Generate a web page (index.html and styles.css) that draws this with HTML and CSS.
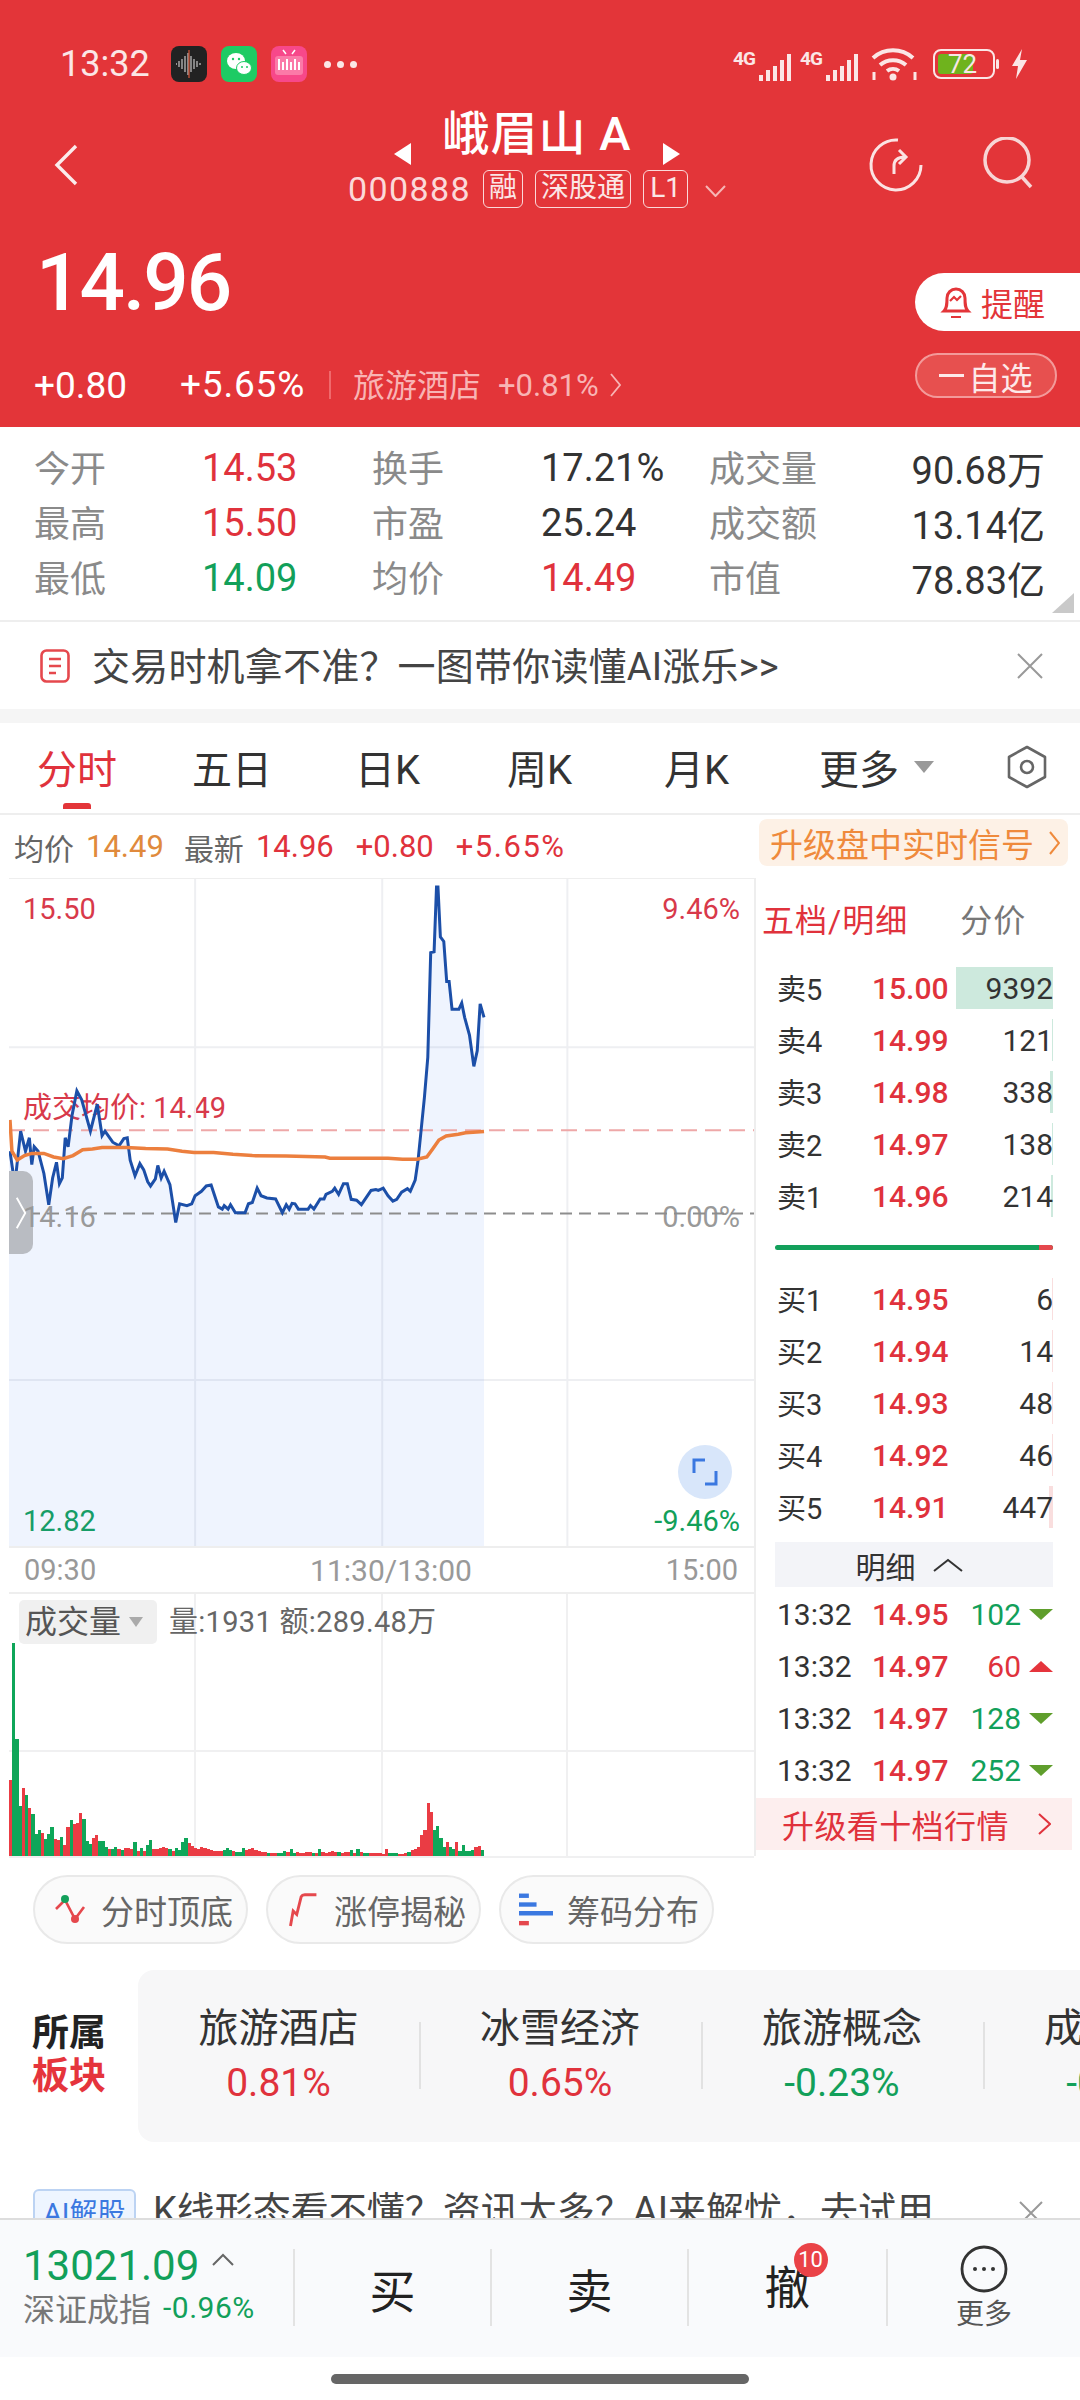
FILE: index.html
```html
<!DOCTYPE html>
<html lang="zh-CN">
<head>
<meta charset="utf-8">
<title>峨眉山A</title>
<link rel="stylesheet" href="styles.css">
</head>
<body>
<div class="page">
<header class="header">
  <div class="status">
    <span class="clock">13:32</span>
    <svg class="app app-rec" viewBox="0 0 36 36"><rect width="36" height="36" rx="8" fill="#222"/><path d="M5 18h1M8 15v6M11 13v10M14 10v16M17 7v22M20 10v16M23 13v10M26 15v6M29 17v2" stroke="#bbb" stroke-width="1.3"/><path d="M18 4v28" stroke="#d9583a" stroke-width="1.2"/></svg>
    <svg class="app" viewBox="0 0 36 36"><rect width="36" height="36" rx="8" fill="#1ecb64"/><ellipse cx="15" cy="15" rx="9" ry="8" fill="#fff"/><ellipse cx="23" cy="22" rx="7.5" ry="6.5" fill="#fff" stroke="#1ecb64"/><circle cx="12" cy="13" r="1.2" fill="#1ecb64"/><circle cx="18" cy="13" r="1.2" fill="#1ecb64"/><circle cx="21" cy="21" r="1" fill="#1ecb64"/><circle cx="26" cy="21" r="1" fill="#1ecb64"/></svg>
    <svg class="app" viewBox="0 0 36 36"><rect width="36" height="36" rx="8" fill="#f7488a"/><path d="M12 4l3 4M24 4l-3 4" stroke="#fff" stroke-width="1.5"/><rect x="4" y="10" width="28" height="19" rx="3" fill="#fb7aa8"/><path d="M8 13v11M12 16v8M16 13v11M20 16v8M24 13v11M28 16v8" stroke="#fff" stroke-width="2"/></svg>
    <span class="dots"><i></i><i></i><i></i></span>
    <div class="status-right">
      <span class="net">4G</span>
      <svg class="signal" viewBox="0 0 34 30"><path d="M2 30v-6M9 30v-11M16 30v-15M23 30v-21M30 30v-27" stroke="#fbe6e6" stroke-width="4"/></svg>
      <span class="net net2">4G</span>
      <svg class="signal" viewBox="0 0 34 30"><path d="M2 30v-6M9 30v-11M16 30v-15M23 30v-21M30 30v-27" stroke="#fbe6e6" stroke-width="4"/></svg>
      <svg class="wifi" viewBox="0 0 48 36"><path d="M2 12a30 30 0 0 1 40 0M9 19a20 20 0 0 1 26 0M16 25a10 10 0 0 1 12 0" fill="none" stroke="#fbe6e6" stroke-width="4"/><circle cx="22" cy="31" r="3.5" fill="#fbe6e6"/><path d="M3 26v8M44 26v8" stroke="#fbe6e6" stroke-width="3"/></svg>
      <div class="battery"><div class="battery-fill"></div><span>72</span></div>
      <svg class="bolt" viewBox="0 0 17 30"><path d="M11 0L1 17h6l-2 13L16 11H9z" fill="#fbe6e6"/></svg>
    </div>
  </div>
  <div class="titlebar">
    <div class="tb-left"><svg class="back" viewBox="0 0 24 42"><path d="M22 2L3 21l19 19" fill="none" stroke="#fbecec" stroke-width="3.4"/></svg></div>
    <div class="tb-center">
      <div class="title-line">
        <svg class="tri" viewBox="0 0 17 22"><path d="M17 0v22L0 11z" fill="#fff"/></svg>
        <span class="title">峨眉山 A</span>
        <svg class="tri" viewBox="0 0 17 22"><path d="M0 0v22l17-11z" fill="#fff"/></svg>
      </div>
      <div class="code-line">
        <span class="code">000888</span>
        <span class="tag">融</span><span class="tag">深股通</span><span class="tag tag-l">L1</span>
        <svg class="down" viewBox="0 0 21 12"><path d="M1 1l9.500 10L20 1" fill="none" stroke="#f6b5b5" stroke-width="2"/></svg>
      </div>
    </div>
    <div class="tb-right">
      <svg class="ic-refresh" viewBox="0 0 56 56"><path d="M30 3A25 25 0 1 0 53 28" fill="none" stroke="#fbe3e3" stroke-width="3"/><path d="M26 37V29Q26 20 37 20M31 13l7 7-7 7" fill="none" stroke="#fbe3e3" stroke-width="3"/></svg>
      <svg class="ic-search" viewBox="0 0 52 52"><circle cx="25" cy="23" r="22" fill="none" stroke="#f7d5d5" stroke-width="3.500"/><path d="M40 40l9 10" stroke="#f7d5d5" stroke-width="3.500"/></svg>
    </div>
  </div>
  <div class="quote">
    <div class="quote-left">
      <div class="price">14.96</div>
      <div class="change">
        <span class="chg-a">+0.80</span>
        <span class="chg-b">+5.65%</span>
        <span class="sect">旅游酒店</span>
        <span class="sect-pct">+0.81%</span>
        <svg class="sect-go" viewBox="0 0 11 24"><path d="M1 1l9 11-9 11" fill="none" stroke="#f8b4b4" stroke-width="1.800"/></svg>
      </div>
    </div>
    <div class="quote-right">
      <div class="remind">
        <svg viewBox="0 0 32 36"><path d="M4 27c3-3 3-7 3-13a9 9 0 0 1 18 0c0 6 0 10 3 13z" fill="none" stroke="#e33539" stroke-width="3"/><path d="M11 33h10M10 17l4-4 3 3 4-4" fill="none" stroke="#e33539" stroke-width="2.200"/></svg>
        <span>提醒</span>
      </div>
      <div class="watch"><i></i>自选</div>
    </div>
  </div>
</header>

<section class="stats">
  <span class="k">今开</span><span class="v red">14.53</span><span class="k">换手</span><span class="v">17.21%</span><span class="k">成交量</span><span class="v end">90.68万</span>
  <span class="k">最高</span><span class="v red">15.50</span><span class="k">市盈</span><span class="v">25.24</span><span class="k">成交额</span><span class="v end">13.14亿</span>
  <span class="k">最低</span><span class="v green">14.09</span><span class="k">均价</span><span class="v red">14.49</span><span class="k">市值</span><span class="v end">78.83亿</span>
  <i class="corner"></i>
</section>

<section class="notice">
  <svg class="notice-ic" viewBox="0 0 30 34"><rect x="1.500" y="1.500" width="27" height="31" rx="5" fill="none" stroke="#e5484d" stroke-width="2.600"/><path d="M9 10h12M9 17h12M9 24h7" stroke="#e5484d" stroke-width="2.600"/></svg>
  <span class="notice-text">交易时机拿不准？一图带你读懂AI涨乐&gt;&gt;</span>
  <svg class="close" viewBox="0 0 26 26"><path d="M1 1l24 24M25 1L1 25" stroke="#999" stroke-width="2"/></svg>
</section>

<div class="band"></div>

<nav class="tabs">
  <span class="tab on">分时</span><span class="tab">五日</span><span class="tab">日K</span><span class="tab">周K</span><span class="tab">月K</span>
  <span class="tab more">更多<i class="caret"></i></span>
  <svg class="hex" viewBox="0 0 42 44"><path d="M21 2l18 10v20L21 42 3 32V12z" fill="none" stroke="#666" stroke-width="2.600" stroke-linejoin="round"/><circle cx="21" cy="22" r="6" fill="none" stroke="#666" stroke-width="2.600"/></svg>
</nav>

<div class="inforow">
  <span class="gray">均价</span><span class="orange num">14.49</span>
  <span class="gray ml">最新</span><span class="red tight num">14.96</span>
  <span class="red ml2 num">+0.80</span><span class="red ml2 num wide">+5.65%</span>
  <span class="signal-chip">升级盘中实时信号<svg viewBox="0 0 11 24"><path d="M1 1l9 11-9 11" fill="none" stroke="#ef8a3c" stroke-width="2"/></svg></span>
</div>

<main class="main">
  <div class="charts">
    <div class="pricechart">
      <span class="lb lb-tl red2">15.50</span>
      <span class="lb lb-tr red2">9.46%</span>
      <span class="lb lb-avg red2">成交均价: 14.49</span>
      <span class="lb lb-ml">14.16</span>
      <span class="lb lb-mr">0.00%</span>
      <span class="lb lb-bl green">12.82</span>
      <span class="lb lb-br green">-9.46%</span>
      <svg class="plot" viewBox="18 20 1537 1495" preserveAspectRatio="none">
        <g class="grid"><path d="M402 20V1515M788 20V1515M1170 20V1515M18 397H1555M18 1143H1555"/></g>
        <path class="area" d="M20 630L30 705 42 585 52 630 60 600 65 660 70 620 78 630 90 680 100 750 108 690 116 655 122 703 128 690 134 600 140 620 148 550 158 495 168 515 186 585 200 525 210 595 216 585 232 610 245 618 255 602 262 600 268 650 278 685 288 658 296 672 304 698 310 708 320 692 325 662 332 690 338 675 350 705 362 790 370 748 385 752 395 748 402 730 415 720 425 708 435 706 450 755 458 760 462 752 470 760 475 750 485 768 505 768 512 748 520 745 530 713 538 730 550 735 568 737 582 768 590 750 596 760 602 747 608 748 615 760 635 760 640 752 647 760 660 737 668 737 672 727 685 720 690 713 698 727 708 703 716 703 724 738 735 740 745 750 765 718 775 716 780 718 790 713 800 730 810 742 818 738 828 722 840 714 846 720 856 695 862 650 875 510 882 420 888 185 895 183 900 38 903 38 908 150 915 160 921 250 926 250 932 312 946 312 952 298 958 330 968 370 977 440 984 405 990 300 998 330V1515H18V630Z"/>
        <path class="dash-avg" d="M18 583H1555"/>
        <path class="dash-base" d="M18 770H1555"/>
        <path class="line-blue" d="M20 630L30 705 42 585 52 630 60 600 65 660 70 620 78 630 90 680 100 750 108 690 116 655 122 703 128 690 134 600 140 620 148 550 158 495 168 515 186 585 200 525 210 595 216 585 232 610 245 618 255 602 262 600 268 650 278 685 288 658 296 672 304 698 310 708 320 692 325 662 332 690 338 675 350 705 362 790 370 748 385 752 395 748 402 730 415 720 425 708 435 706 450 755 458 760 462 752 470 760 475 750 485 768 505 768 512 748 520 745 530 713 538 730 550 735 568 737 582 768 590 750 596 760 602 747 608 748 615 760 635 760 640 752 647 760 660 737 668 737 672 727 685 720 690 713 698 727 708 703 716 703 724 738 735 740 745 750 765 718 775 716 780 718 790 713 800 730 810 742 818 738 828 722 840 714 846 720 856 695 862 650 875 510 882 420 888 185 895 183 900 38 903 38 908 150 915 160 921 250 926 250 932 312 946 312 952 298 958 330 968 370 977 440 984 405 990 300 998 330"/>
        <path class="line-orange" d="M20 560L24 630 35 650 50 640 65 635 90 635 110 643 130 647 150 640 170 627 190 625 210 622 260 622 300 624 345 625 375 630 400 633 440 633 480 637 520 640 590 641 670 643 680 646 800 646 830 648 860 648 880 643 892 625 905 605 920 596 945 592 960 589 998 586"/>
      </svg>
      <div class="handle"><svg viewBox="0 0 14 40"><path d="M2 2l10 18L2 38" fill="none" stroke="#fff" stroke-width="2.200"/></svg></div>
      <div class="expand"><svg viewBox="0 0 26 28"><path d="M13 2H2v13M13 26h11V13" fill="none" stroke="#3b78e0" stroke-width="3"/></svg></div>
    </div>
    <div class="axis"><span>09:30</span><span class="axis-mid">11:30/13:00</span><span>15:00</span></div>
    <div class="volchart">
      <svg class="volgrid" viewBox="0 0 745 264"><path d="M186 0V264M373 0V264M558 0V264M0 157H745M0 263H745" stroke="#f0f0f1" stroke-width="2" fill="none"/></svg>
      <div class="bars"><i class="r" style="height:76px"></i><i class="g" style="height:213px"></i><i class="g" style="height:117px"></i><i class="g" style="height:50px"></i><i class="r" style="height:68px"></i><i class="g" style="height:61px"></i><i class="r" style="height:48px"></i><i class="g" style="height:42px"></i><i class="g" style="height:22px"></i><i class="g" style="height:26px"></i><i class="r" style="height:23px"></i><i class="g" style="height:17px"></i><i class="g" style="height:22px"></i><i class="g" style="height:29px"></i><i class="r" style="height:17px"></i><i class="r" style="height:16px"></i><i class="g" style="height:19px"></i><i class="r" style="height:11px"></i><i class="r" style="height:29px"></i><i class="g" style="height:36px"></i><i class="r" style="height:32px"></i><i class="r" style="height:33px"></i><i class="r" style="height:43px"></i><i class="g" style="height:37px"></i><i class="g" style="height:15px"></i><i class="g" style="height:12px"></i><i class="r" style="height:18px"></i><i class="r" style="height:21px"></i><i class="g" style="height:15px"></i><i class="g" style="height:15px"></i><i class="g" style="height:9px"></i><i class="r" style="height:7px"></i><i class="g" style="height:7px"></i><i class="g" style="height:9px"></i><i class="r" style="height:7px"></i><i class="g" style="height:6px"></i><i class="r" style="height:8px"></i><i class="r" style="height:8px"></i><i class="r" style="height:7px"></i><i class="g" style="height:14px"></i><i class="r" style="height:5px"></i><i class="g" style="height:8px"></i><i class="r" style="height:5px"></i><i class="g" style="height:11px"></i><i class="g" style="height:16px"></i><i class="r" style="height:7px"></i><i class="r" style="height:7px"></i><i class="r" style="height:8px"></i><i class="r" style="height:9px"></i><i class="r" style="height:8px"></i><i class="g" style="height:7px"></i><i class="r" style="height:5px"></i><i class="g" style="height:8px"></i><i class="g" style="height:6px"></i><i class="g" style="height:14px"></i><i class="g" style="height:18px"></i><i class="r" style="height:13px"></i><i class="r" style="height:10px"></i><i class="r" style="height:8px"></i><i class="r" style="height:7px"></i><i class="r" style="height:9px"></i><i class="r" style="height:8px"></i><i class="r" style="height:7px"></i><i class="r" style="height:6px"></i><i class="r" style="height:5px"></i><i class="r" style="height:5px"></i><i class="r" style="height:5px"></i><i class="g" style="height:6px"></i><i class="g" style="height:8px"></i><i class="g" style="height:6px"></i><i class="r" style="height:5px"></i><i class="g" style="height:4px"></i><i class="g" style="height:4px"></i><i class="g" style="height:8px"></i><i class="r" style="height:6px"></i><i class="r" style="height:7px"></i><i class="r" style="height:8px"></i><i class="r" style="height:6px"></i><i class="r" style="height:5px"></i><i class="r" style="height:4px"></i><i class="r" style="height:4px"></i><i class="g" style="height:3px"></i><i class="r" style="height:3px"></i><i class="r" style="height:3px"></i><i class="g" style="height:3px"></i><i class="g" style="height:3px"></i><i class="g" style="height:5px"></i><i class="r" style="height:4px"></i><i class="g" style="height:7px"></i><i class="g" style="height:3px"></i><i class="r" style="height:4px"></i><i class="r" style="height:3px"></i><i class="r" style="height:3px"></i><i class="r" style="height:4px"></i><i class="r" style="height:4px"></i><i class="g" style="height:3px"></i><i class="r" style="height:3px"></i><i class="g" style="height:7px"></i><i class="r" style="height:4px"></i><i class="r" style="height:3px"></i><i class="r" style="height:4px"></i><i class="r" style="height:5px"></i><i class="r" style="height:4px"></i><i class="g" style="height:4px"></i><i class="r" style="height:3px"></i><i class="r" style="height:4px"></i><i class="r" style="height:4px"></i><i class="g" style="height:6px"></i><i class="r" style="height:3px"></i><i class="g" style="height:7px"></i><i class="r" style="height:4px"></i><i class="g" style="height:3px"></i><i class="g" style="height:3px"></i><i class="r" style="height:3px"></i><i class="r" style="height:3px"></i><i class="r" style="height:3px"></i><i class="r" style="height:3px"></i><i class="r" style="height:2px"></i><i class="r" style="height:7px"></i><i class="g" style="height:3px"></i><i class="g" style="height:3px"></i><i class="g" style="height:3px"></i><i class="r" style="height:2px"></i><i class="r" style="height:2px"></i><i class="r" style="height:3px"></i><i class="g" style="height:4px"></i><i class="r" style="height:6px"></i><i class="r" style="height:7px"></i><i class="r" style="height:9px"></i><i class="r" style="height:21px"></i><i class="r" style="height:26px"></i><i class="r" style="height:53px"></i><i class="r" style="height:44px"></i><i class="g" style="height:26px"></i><i class="g" style="height:30px"></i><i class="g" style="height:18px"></i><i class="g" style="height:9px"></i><i class="r" style="height:14px"></i><i class="g" style="height:9px"></i><i class="g" style="height:7px"></i><i class="r" style="height:14px"></i><i class="g" style="height:5px"></i><i class="g" style="height:11px"></i><i class="g" style="height:5px"></i><i class="g" style="height:5px"></i><i class="g" style="height:6px"></i><i class="r" style="height:9px"></i><i class="r" style="height:10px"></i><i class="g" style="height:6px"></i></div>
      <div class="vol-chip">成交量<i class="caret small"></i></div>
      <div class="vol-text">量:1931 额:289.48万</div>
    </div>
  </div>

  <aside class="book">
    <div class="book-head"><span class="red">五档/明细</span><span class="book-alt">分价</span></div>
    <div class="row"><span>卖5</span><b>15.00</b><em>9392</em><i class="depth dg" style="width:97px"></i></div>
    <div class="row"><span>卖4</span><b>14.99</b><em>121</em><i class="depth dg" style="width:1px"></i></div>
    <div class="row"><span>卖3</span><b>14.98</b><em>338</em><i class="depth dg" style="width:3px"></i></div>
    <div class="row"><span>卖2</span><b>14.97</b><em>138</em><i class="depth dg" style="width:1px"></i></div>
    <div class="row"><span>卖1</span><b>14.96</b><em>214</em><i class="depth dg" style="width:2px"></i></div>
    <div class="ratio"><i></i></div>
    <div class="row"><span>买1</span><b>14.95</b><em>6</em><i class="depth dr" style="width:1px"></i></div>
    <div class="row"><span>买2</span><b>14.94</b><em>14</em><i class="depth dr" style="width:1px"></i></div>
    <div class="row"><span>买3</span><b>14.93</b><em>48</em><i class="depth dr" style="width:1px"></i></div>
    <div class="row"><span>买4</span><b>14.92</b><em>46</em><i class="depth dr" style="width:1px"></i></div>
    <div class="row"><span>买5</span><b>14.91</b><em>447</em><i class="depth dr" style="width:4px"></i></div>
    <div class="detail-bar">明细<svg viewBox="0 0 30 14"><path d="M1 13L15 2l14 11" fill="none" stroke="#333" stroke-width="2"/></svg></div>
    <div class="tick"><span>13:32</span><b>14.95</b><em class="green">102</em><i class="tdn"></i></div>
    <div class="tick"><span>13:32</span><b>14.97</b><em class="red">60</em><i class="tup"></i></div>
    <div class="tick"><span>13:32</span><b>14.97</b><em class="green">128</em><i class="tdn"></i></div>
    <div class="tick"><span>13:32</span><b>14.97</b><em class="green">252</em><i class="tdn"></i></div>
    <div class="upgrade"><span>升级看十档行情</span><svg viewBox="0 0 13 22"><path d="M1 1l11 10L1 21" fill="none" stroke="#e0323c" stroke-width="2"/></svg></div>
  </aside>
</main>

<div class="chips">
  <div class="chip"><svg viewBox="0 0 34 34"><path d="M3 16l9-9 10 19 9-12" fill="none" stroke="#e5484d" stroke-width="2.600"/><circle cx="12" cy="6" r="4" fill="#13a05b"/><circle cx="22" cy="26" r="4" fill="#e5484d"/></svg><span>分时顶底</span></div>
  <div class="chip"><svg viewBox="0 0 34 38"><path d="M3 37l3-17 4 4 5-20q1-2 4-2h13" fill="none" stroke="#e5484d" stroke-width="3.200"/></svg><span>涨停揭秘</span></div>
  <div class="chip"><svg viewBox="0 0 31 30"><path d="M0 2h9" stroke="#3b78e0" stroke-width="4"/><path d="M0 10h16" stroke="#3b78e0" stroke-width="4"/><path d="M0 18h31" stroke="#3b78e0" stroke-width="4"/><path d="M0 27h9" stroke="#e5484d" stroke-width="4"/></svg><span>筹码分布</span></div>
</div>

<section class="sectors">
  <div class="sector-head"><span>所属</span><span class="red3">板块</span></div>
  <div class="sector-card">
    <div class="sector"><span class="sn">旅游酒店</span><span class="sv red">0.81%</span></div>
    <div class="sector"><span class="sn">冰雪经济</span><span class="sv red">0.65%</span></div>
    <div class="sector"><span class="sn">旅游概念</span><span class="sv green">-0.23%</span></div>
    <div class="sector"><span class="sn">成渝特区</span><span class="sv green">-0.15%</span></div>
  </div>
</section>

<section class="ai">
  <span class="ai-tag">AI解股</span>
  <span class="ai-text">K线形态看不懂？资讯太多？AI来解忧，去试用</span>
  <svg class="close close-ai" viewBox="0 0 24 24"><path d="M1 1l22 22M23 1L1 23" stroke="#999" stroke-width="2"/></svg>
</section>

<footer class="bottom">
  <div class="idx">
    <div class="idx-top"><span class="green">13021.09</span><svg viewBox="0 0 22 13"><path d="M1 12L11 2l10 10" fill="none" stroke="#666" stroke-width="2"/></svg></div>
    <div class="idx-sub"><span class="idx-name">深证成指</span><span class="green idx-pct">-0.96%</span></div>
  </div>
  <div class="act">买</div>
  <div class="act">卖</div>
  <div class="act act-c"><span class="act-inner">撤<i class="badge">10</i></span></div>
  <div class="act-more">
    <svg viewBox="0 0 48 48"><circle cx="24" cy="24" r="22" fill="none" stroke="#333" stroke-width="2.800"/><circle cx="15" cy="24" r="2" fill="#333"/><circle cx="24" cy="24" r="2" fill="#333"/><circle cx="33" cy="24" r="2" fill="#333"/></svg>
    <span>更多</span>
  </div>
</footer>
<div class="home"><i></i></div>
</div>
</body>
</html>
```

FILE: styles.css
```css
*{box-sizing:border-box}
html,body{margin:0;padding:0;background:#fff}
body{font-family:Roboto,"Noto Sans CJK SC",sans-serif;color:#333}
i,em,b{font-style:normal;font-weight:inherit}
.page{width:1080px;height:2400px;overflow:hidden;display:flex;flex-direction:column}
.red{color:#e0323c}
.red2{color:#d8394a}
.green{color:#12a05a}

/* header */
.header{height:427px;background:#e33539;color:#fff;flex:none;overflow:hidden;padding-top:46px}
.status{display:flex;align-items:center;height:36px;padding-left:60px}
.clock{font-size:36px;color:#fbe6e6;width:111px}
.app{width:36px;height:36px;margin-right:14px;flex:none}
.dots{display:flex;gap:6px;margin-left:3px}
.dots i{width:7px;height:7px;border-radius:50%;background:#fbe6e6}
.status-right{margin-left:auto;padding-right:52px;display:flex;align-items:center}
.net{font-size:19px;font-weight:700;color:#fbe6e6;margin-top:-12px;width:26px;letter-spacing:-1px}
.net2{margin-left:7px}
.signal{width:34px;height:30px;margin-top:4px}
.wifi{width:48px;height:36px;margin-left:11px}
.battery{position:relative;width:62px;height:30px;border:2px solid #fbe6e6;border-radius:8px;margin-left:14px;margin-right:16px;padding:3px;text-align:center}
.battery::after{content:"";position:absolute;right:-6px;top:8px;width:3px;height:10px;background:#fbe6e6;border-radius:2px}
.battery-fill{height:100%;width:68%;background:#6fb31d;border-radius:3px}
.battery span{position:absolute;left:13px;top:-1px;font-size:26px;line-height:28px;color:#fbe6e6}
.bolt{width:17px;height:30px}
.titlebar{display:grid;grid-template-columns:1fr auto 1fr;height:100px;margin-top:26px}
.tb-left{padding:36px 0 0 54px}
.back{width:24px;height:42px;display:block}
.tb-center{display:flex;flex-direction:column;align-items:center;padding-right:6px}
.title-line{display:flex;align-items:flex-end;gap:32px;height:52px}
.title{font-size:47px;line-height:52px;letter-spacing:1px;color:#fff;font-weight:500}
.tri{width:17px;height:22px;margin-bottom:-5px}
.code-line{display:flex;align-items:center;height:38px;margin-top:10px;color:#fbd9d9}
.code{font-size:34px;letter-spacing:1.400px;margin-right:12px}
.tag{font-size:28px;line-height:34px;height:38px;border:1px solid #fbd9d9;border-radius:6px;padding:0 5px;margin-right:12px;color:#fbe6e6;white-space:nowrap}
.tag-l{font-size:28px;padding:0 6px;margin-right:17px}
.down{width:21px;height:12px;margin-top:4px}
.tb-right{display:flex;justify-content:flex-end;gap:58px;padding:29px 46px 0 0}
.ic-refresh{width:56px;height:56px}
.ic-search{width:52px;height:52px}
.quote{display:flex;justify-content:space-between;height:219px}
.quote-left{padding:35px 0 0 34px}
.price{font-size:80px;line-height:80px;font-weight:500;margin-left:2px;letter-spacing:-2px}
.change{display:flex;align-items:center;height:44px;margin-top:40px;font-size:37px;white-space:nowrap}
.chg-a{width:146px}
.chg-b{width:151px;border-right:2px solid #f0696c;height:28px;line-height:28px;letter-spacing:.8px}
.sect{font-size:32px;color:#f8b4b4;margin-left:22px;position:relative;top:-2px}
.sect-pct{font-size:31px;color:#f8b4b4;margin-left:17px}
.sect-go{width:11px;height:24px;margin-left:11px}
.quote-right{width:165px;padding-top:65px}
.remind{height:58px;background:#fff;border-radius:29px 0 0 29px;display:flex;align-items:center;padding-left:25px;gap:9px;color:#e33539;font-size:32px}
.remind svg{width:32px;height:36px}
.watch{width:142px;height:45px;margin-top:22px;border:2px solid #f39a9a;border-radius:23px;background:#e7504f;display:flex;align-items:center;justify-content:center;font-size:32px;color:#fde9e9;gap:4px}
.watch i{width:25px;height:3px;background:#fde9e9}

/* stats */
.stats{position:relative;flex:none;display:grid;grid-template-columns:168px 170px 169px 168px 105px 1fr;grid-auto-rows:55px;align-items:center;padding:12px 35px 16px 34px;border-bottom:2px solid #eee;height:195px}
.k{font-size:36px;color:#8a8a8a;white-space:nowrap;position:relative;top:-1px}
.v{font-size:38px;color:#333;white-space:nowrap;position:relative;top:1px}
.v.red{color:#e0323c}
.v.green{color:#12a05a}
.end{justify-self:end}
.corner{position:absolute;right:6px;bottom:7px;border-style:solid;border-width:0 0 20px 22px;border-color:transparent transparent #c9c9c9 transparent}

/* notice */
.notice{flex:none;height:87px;display:flex;align-items:center;padding:0 37px 0 40px}
.notice-ic{width:30px;height:34px;margin-right:22px;flex:none}
.notice-text{font-size:38px;color:#444;white-space:nowrap;letter-spacing:.2px;position:relative;top:-2px}
.close{width:26px;height:26px;margin-left:auto;flex:none}
.band{flex:none;height:14px;background:#f5f5f5}

/* tabs */
.tabs{flex:none;height:92px;display:grid;grid-template-columns:155px 163px 152px 157px 155px auto 1fr;align-items:center;padding:0 32px 2px 37px;border-bottom:2px solid #eee;position:relative}
.tab{font-size:40px;color:#333;position:relative;white-space:nowrap;display:flex;align-items:center}
.tab.on{color:#e0323c}
.tab.on::after{content:"";position:absolute;left:26px;top:65px;width:28px;height:6px;background:#e33539;border-radius:3px 3px 0 0}
.caret{display:inline-block;margin-left:15px;border-style:solid;border-width:12px 10px 0;border-color:#999 transparent transparent}
.hex{width:42px;height:44px;justify-self:end}

/* info */
.inforow{flex:none;height:63px;display:flex;align-items:center;padding:0 12px 0 14px;font-size:30px;white-space:nowrap}
.num{font-size:31px}
.wide{letter-spacing:1.500px}
.gray{color:#666}
.orange{color:#e08a3c;margin-left:12px}
.ml{margin-left:20px}
.tight{margin-left:12px}
.ml2{margin-left:22px}
.signal-chip{margin-left:auto;width:309px;height:47px;display:flex;align-items:center;background:#fdf1e6;border-radius:8px;color:#ef8a3c;font-size:33px;padding:0 8px 0 11px;margin-top:-8px;justify-content:space-between}
.signal-chip svg{width:11px;height:24px}

/* main */
.main{flex:none;height:978px;display:flex;padding-left:9px}
.charts{width:745px;flex:none}
.pricechart{position:relative;height:668px;background:#fff;border-top:1px solid #eee}
.plot{position:relative;z-index:1;display:block;width:745px;height:667px}
.plot path{vector-effect:non-scaling-stroke;fill:none}
.plot .grid path{stroke:#eeeff2;stroke-width:2}
.plot .area{fill:rgba(70,130,240,.085);stroke:none}
.plot .dash-avg{stroke:#eea8a8;stroke-width:2;stroke-dasharray:16 8}
.plot .dash-base{stroke:#8d8d8d;stroke-width:2;stroke-dasharray:12 7}
.plot .line-blue{stroke:#1c4fa8;stroke-width:3}
.plot .line-orange{stroke:#ec7f3e;stroke-width:3.500}
.lb{position:absolute;z-index:0;font-size:29px;line-height:34px;white-space:nowrap}
.lb-tl{left:14px;top:13px}
.lb-tr{right:14px;top:13px}
.lb-avg{left:14px;top:212px}
.lb-ml{left:14px;top:321px;color:#999;z-index:3}
.lb-mr{right:14px;top:321px;color:#999}
.lb-bl{left:14px;top:625px}
.lb-br{right:14px;top:625px}
.handle{position:absolute;z-index:2;left:0;top:292px;width:24px;height:83px;background:#b9bcc2;border-radius:0 10px 10px 0;display:flex;align-items:center;justify-content:center}
.handle svg{width:12px;height:34px}
.expand{position:absolute;z-index:2;left:669px;top:566px;width:54px;height:54px;border-radius:50%;background:#d8e6fa;display:flex;align-items:center;justify-content:center}
.expand svg{width:26px;height:28px}
.axis{height:46px;display:flex;justify-content:space-between;align-items:center;padding:0 16px 0 15px;font-size:29px;color:#999;border-top:2px solid #eee;position:relative;white-space:nowrap}
.axis-mid{position:relative;left:10px;font-size:30px}
.volchart{position:relative;height:264px;border-top:2px solid #eee}
.volgrid{position:absolute;left:0;top:0;width:745px;height:264px}
.bars{position:absolute;left:0;width:474px;bottom:0;height:220px;display:flex;align-items:flex-end}
.bars i{display:block;flex:1 1 0;min-width:0}
.bars .r{background:#ea3c44}
.bars .g{background:#0fa659}
.vol-chip{position:absolute;left:10px;top:6px;width:138px;height:44px;background:#f0f0f0;border-radius:5px;font-size:32px;line-height:44px;padding-left:6px;color:#555;white-space:nowrap;display:flex;align-items:center}
.caret.small{margin-left:8px;border-width:10px 7px 0;border-color:#aaa transparent transparent}
.vol-text{position:absolute;left:160px;top:10px;font-size:29px;letter-spacing:.3px;line-height:36px;color:#666;white-space:nowrap}

/* order book */
.book{flex:1;border-left:2px solid #eee;padding-left:19px;padding-right:27px;min-width:0;position:relative}
.book-head{height:84px;display:flex;align-items:center;font-size:32px;letter-spacing:1px;margin-left:-13px;white-space:nowrap;margin-top:-2px;margin-bottom:2px}
.book-alt{color:#777;margin-left:52px}
.row,.tick{position:relative;height:52px;display:grid;align-items:center;font-size:30px;padding-left:2px;white-space:nowrap}
.row{grid-template-columns:95px 75px 1fr}
.row span{font-size:29px;color:#333;position:relative;z-index:1;top:-1px}
.row b,.tick b{color:#e0323c;font-weight:500}
.row em{text-align:right;color:#333;position:relative;z-index:1}
.row b{position:relative;z-index:1}
.depth{position:absolute;right:0;top:5px;height:42px}
.dg{background:#cde9dd}
.dr{background:#f9dede}
.ratio{height:5px;margin:23px 0;background:#13a05b;border-radius:3px;position:relative;overflow:hidden}
.ratio i{position:absolute;right:0;top:0;bottom:0;width:14px;background:#e5484d}
.detail-bar{height:45px;margin-top:9px;margin-bottom:1px;background:#f3f4f8;display:flex;align-items:center;justify-content:center;gap:17px;font-size:30px;color:#333;padding-right:10px}
.detail-bar svg{width:30px;height:14px}
.tick{grid-template-columns:95px 75px 74px 1fr}
.tick span{color:#333}
.tick em{text-align:right}
.tdn,.tup{justify-self:end;width:0;height:0;border-style:solid;border-width:0 12px;border-color:transparent}
.tdn{border-top:11px solid #5f9e2c}
.tup{border-bottom:11px solid #e5343c}
.upgrade{margin:2px -19px 0 -19px;height:52px;background:#fdeeee;display:flex;align-items:center;padding:0 21px 0 26px;justify-content:space-between;color:#e0323c;font-size:32px;letter-spacing:.4px;white-space:nowrap}
.upgrade svg{width:13px;height:22px}

/* chips */
.chips{flex:none;display:flex;gap:18px;padding-left:33px;margin-top:19px;height:69px}
.chip{width:215px;height:69px;border:2px solid #e9e9e9;background:#fafafa;border-radius:35px;display:flex;align-items:center;padding-left:18px;font-size:33px;color:#666;white-space:nowrap}
.chip svg{width:34px;height:34px;margin-right:14px;flex:none}

/* sectors */
.sectors{flex:none;height:172px;margin-top:26px;display:flex;padding-left:32px}
.sector-head{width:106px;display:flex;flex-direction:column;font-size:37px;line-height:43px;font-weight:700;color:#222;padding-top:42px;white-space:nowrap}
.red3{color:#e5343c}
.sector-card{flex:1;display:flex;background:#f7f7f8;border-radius:16px 0 0 16px;overflow:hidden;min-width:0}
.sector{position:relative;flex:none;width:282px;display:flex;flex-direction:column;align-items:center;padding-top:34px;white-space:nowrap}
.sector:first-child{width:281px}
.sector + .sector::before{content:"";position:absolute;left:0;top:52px;height:67px;width:2px;background:#e2e2e2}
.sn{font-size:40px;line-height:50px;color:#333}
.sv{font-size:39px;line-height:50px;margin-top:4px}

/* ai */
.ai{flex:none;height:76px;padding:47px 37px 0 33px;display:flex;align-items:flex-start;overflow:hidden}
.ai-tag{width:103px;height:50px;flex:none;border:2px solid #bcd3f3;border-radius:6px;background:#eef5ff;color:#3b78e0;font-size:28px;line-height:46px;text-align:center;white-space:nowrap}
.ai-text{font-size:38px;line-height:44px;color:#444;margin-left:17px;white-space:nowrap}
.close-ai{width:24px;height:24px;margin-top:12px}

/* bottom */
.bottom{flex:none;height:139px;border-top:2px solid #ddd;background:#f9fafc;display:flex;align-items:flex-start;padding-top:29px}
.idx{width:293px;flex:none;padding-left:23px;margin-top:-6px;white-space:nowrap}
.idx-top{display:flex;align-items:center;height:44px;font-size:42px}
.idx-top svg{width:22px;height:13px;margin:-12px 0 0 13px}
.idx-sub{display:flex;align-items:center;height:40px}
.idx-name{font-size:32px;color:#777}
.idx-pct{font-size:30px;letter-spacing:.5px;margin-left:12px}
.act{flex:none;width:197px;height:77px;border-left:2px solid #e3e3e3;display:flex;align-items:center;justify-content:center;font-size:46px;color:#222}
.act-c{width:199px}
.act-inner{position:relative;display:block;line-height:60px}
.badge{position:absolute;left:29px;top:-15px;width:34px;height:34px;border-radius:50%;background:#ea4247;color:#fff;font-size:22px;line-height:34px;text-align:center}
.act-more{flex:1;height:77px;border-left:2px solid #e3e3e3;display:flex;flex-direction:column;align-items:center}
.act-more svg{width:48px;height:48px;margin-top:-4px;flex:none}
.act-more span{font-size:28px;line-height:34px;color:#555;margin-top:5px;white-space:nowrap}
.home{flex:none;height:43px;padding-top:17px}
.home i{display:block;width:418px;height:10px;margin:0 auto;background:#666;border-radius:5px}
```
